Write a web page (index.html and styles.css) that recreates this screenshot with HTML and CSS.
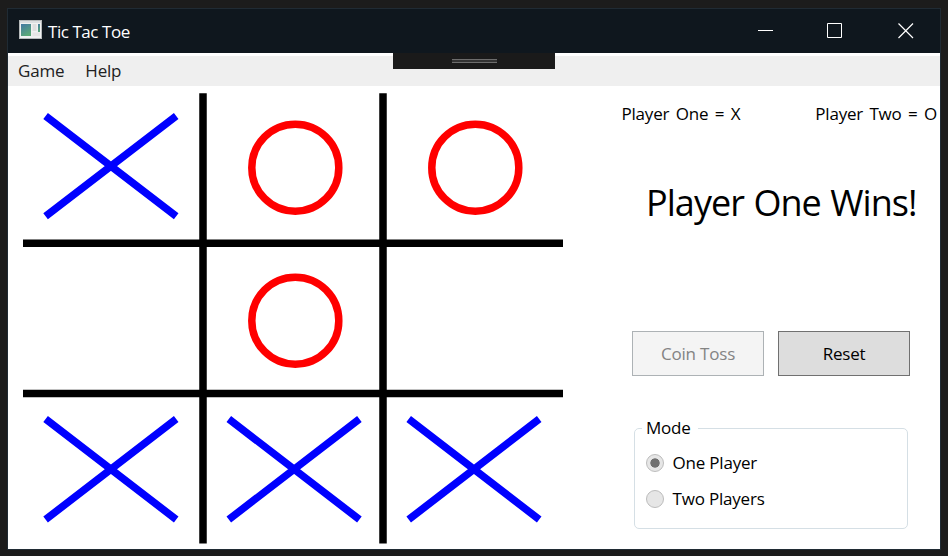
FILE: index.html
```
<!DOCTYPE html>
<html lang="en">
<head>
<meta charset="utf-8">
<title>Tic Tac Toe</title>
<link rel="stylesheet" href="styles.css">
</head>
<body>
<div class="window">
  <header class="titlebar">
    <svg class="app-icon" width="23" height="19" viewBox="0 0 23 19">
      <defs><linearGradient id="pane" x1="0" y1="0" x2="0.5" y2="1"><stop offset="0" stop-color="#4478a4"/><stop offset="1" stop-color="#5aa878"/></linearGradient></defs>
      <rect x=".5" y=".5" width="22" height="18" fill="#f0f1f1" stroke="#b5b9ba"/>
      <rect x="1" y="1" width="21" height="2" fill="#dcdee0"/>
      <rect x="2" y="4" width="10" height="12" fill="url(#pane)"/>
      <rect x="13.5" y="4" width="4" height="7" fill="#dedede"/>
      <rect x="19" y="4" width="2" height="8" fill="url(#pane)"/>
      <rect x="13.5" y="12.5" width="7.5" height="3.5" fill="#e6e6e6"/>
    </svg>
    <h1 class="title">Tic Tac Toe</h1>
    <svg class="controls" width="157" height="17" viewBox="0 0 157 17" fill="none" stroke="#fff">
      <path d="M0 8.5h15M69.500 1.500h14v14h-14z"/>
      <path d="M140.500 1.500l14.500 14.500M155 1.500l-14.500 14.500" stroke-width="1.200"/>
    </svg>
  </header>
  <div class="debug-bar"><span class="grip"></span></div>
  <nav class="menu"><span class="game">Game</span><span class="help">Help</span></nav>
  <main class="content">
    <svg class="board" width="540" height="451" viewBox="23 93 540 451" fill="none" stroke-width="7.500">
      <path stroke="#000" d="M203 93.200V543.500M383 93.200V543.500M23 243.300H563M23 393.400H563"/>
      <g stroke="#00f">
        <path d="M45.600 116L176.200 216.300M176.200 116L45.600 216.300"/>
        <path d="M45.600 419L176.200 519.500M176.200 419L45.600 519.500"/>
        <path d="M228.800 419L359.400 519.500M359.400 419L228.800 519.500"/>
        <path d="M408.700 419L539.200 519.500M539.200 419L408.700 519.500"/>
      </g>
      <g stroke="#f00">
        <circle cx="295.300" cy="167.700" r="43.500"/>
        <circle cx="475.300" cy="167.700" r="43.500"/>
        <circle cx="295.300" cy="320.700" r="43.500"/>
      </g>
    </svg>
    <section class="panel">
      <div class="players"><span class="one">Player One = X</span><span class="two">Player Two = O</span></div>
      <p class="result">Player One Wins!</p>
      <div class="actions">
        <button class="button toss" disabled>Coin Toss</button>
        <button class="button reset">Reset</button>
      </div>
      <fieldset class="mode">
        <legend>Mode</legend>
        <label class="option"><span class="radio checked"></span><span class="label-one">One Player</span></label>
        <label class="option"><span class="radio"></span><span class="label-two">Two Players</span></label>
      </fieldset>
    </section>
  </main>
</div>
</body>
</html>
```
FILE: styles.css
```
* { box-sizing: border-box; }
body {
  margin: 0;
  height: 556px;
  padding: 8px 7px 6px;
  background: #1c1c1c;
  color: #000;
  font: 17px/24px "Open Sans", sans-serif;
  letter-spacing: -0.2px;
  overflow: hidden;
}
span, h1, p, button, legend { white-space: nowrap; }
.window {
  position: relative;
  height: 542px;
  border: 1px solid #202b34;
  background: #fff;
}
.titlebar {
  display: flex;
  align-items: center;
  height: 44px;
  padding: 0 25px 0 11px;
  background: #0f171e;
  color: #fff;
}
.app-icon { margin-bottom: 3px; }
.title { margin: 1px 0 0 6px; font-size: 17px; font-weight: 400; letter-spacing: -0.45px; }
.controls { margin: 0 0 2px auto; }
.debug-bar {
  position: absolute;
  left: 385px;
  top: 44px;
  display: flex;
  justify-content: center;
  width: 162px;
  height: 16px;
  padding-top: 6px;
  background: #1a1a1a;
}
.grip { width: 45px; height: 4px; border: solid #6d6d6d; border-width: 1px 0; background: #333; }
.menu {
  display: flex;
  gap: 21px;
  height: 30px;
  margin-top: 3px;
  padding: 3px 10px;
  background: #efefef;
  color: #212121;
}
.content { display: flex; padding: 7px 0 0 15px; }
.board { flex: none; }
.panel { width: 377px; padding-top: 9px; }
.players { display: flex; justify-content: space-between; padding: 0 3px 0 58.5px; word-spacing: 2.2px; }
.result {
  margin: 52px 0 0 83px;
  font-size: 36px;
  line-height: 50px;
  letter-spacing: -0.95px;
  word-spacing: 1px;
}
.actions { display: flex; gap: 14px; margin: 103px 0 0 69px; }
.button {
  width: 132px;
  height: 45px;
  padding: 0;
  border: 1px solid #707070;
  border-radius: 0;
  background: #ddd;
  color: #000;
  font: inherit;
  letter-spacing: inherit;
}
.button:disabled { border-color: #adb2b5; background: #f4f4f4; color: #838383; }
.mode {
  width: 274px;
  height: 113px;
  margin: 40px 0 0 71px;
  padding: 5px 11px 0;
  border: 1px solid #d5dfe5;
  border-radius: 5px;
}
.mode legend { margin-left: -4px; padding: 0 7px 0 4px; }
.option { display: flex; align-items: center; height: 36px; gap: 8.5px; }
.radio {
  width: 18px;
  height: 18px;
  border: 1px solid #bcbcbc;
  border-radius: 50%;
  background: #e6e6e6;
}
.checked { background: radial-gradient(circle, #707070 4.300px, #e6e6e6 5px); }
```
